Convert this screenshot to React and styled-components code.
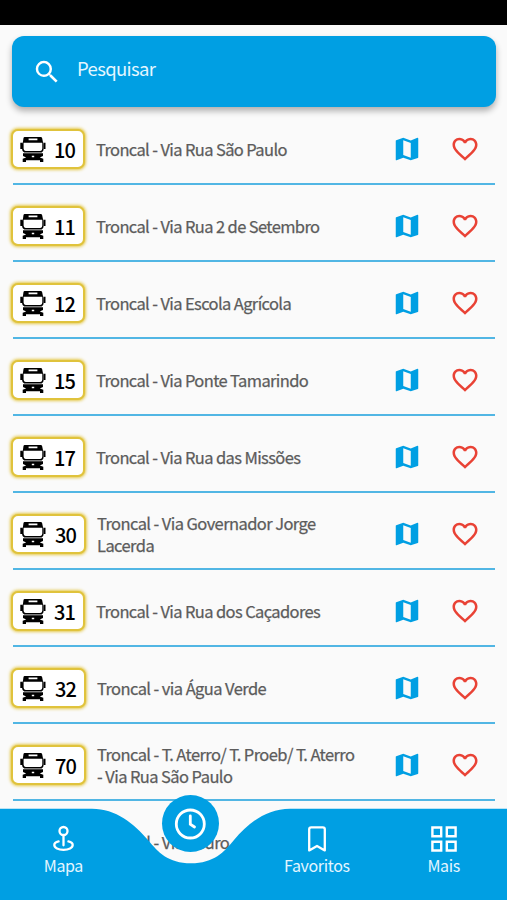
import React from 'react';
import styled, { createGlobalStyle } from 'styled-components';

const BLUE = '#009fe3';

const GlobalStyle = createGlobalStyle`
  * { box-sizing: border-box; }
  body {
    margin: 0;
    background: #fafafa;
    font-family: "Noto Sans CJK SC", "Open Sans", sans-serif;
  }
`;

const Screen = styled.main`
  position: relative;
  display: flex;
  flex-direction: column;
  width: 100%;
  height: 900px;
  overflow: hidden;
  background: #fafafa;
`;

const StatusBar = styled.div`
  flex: none;
  height: 25px;
  background: #000;
`;

const SearchBar = styled.label`
  flex: none;
  display: flex;
  align-items: center;
  gap: 15px;
  height: 71px;
  margin: 11px 11px 0 12px;
  padding-left: 20px;
  border-radius: 12px;
  background: ${BLUE};
  box-shadow: 0 4px 6px rgba(0, 0, 0, 0.3);
  color: #fff;
  svg { display: block; }
`;

const SearchText = styled.span`
  font-size: 18.5px;
  line-height: 28px;
  letter-spacing: -0.65px;
  color: #e4f6ff;
  padding-bottom: 7px;
`;

const RouteList = styled.ul`
  flex: none;
  list-style: none;
  margin: 0;
  padding: 1px 12px 0 13px;
`;

const RouteRow = styled.li`
  display: flex;
  align-items: center;
  height: 77px;
  padding-top: 7px;
  border-bottom: 2px solid #51b6e4;
`;

const Badge = styled.div`
  flex: none;
  display: flex;
  align-items: center;
  gap: 8px;
  width: ${(p) => (p.$wide ? 75 : 74)}px;
  height: 40px;
  margin-left: -2px;
  padding-left: 7px;
  border: 2px solid #e0c33c;
  border-radius: 7px;
  background: #fff;
  box-shadow: 0 0 3px 1px rgba(226, 195, 55, 0.9);
  svg { flex: none; display: block; }
`;

const RouteNumber = styled.span`
  font-size: 20px;
  font-weight: 500;
  line-height: 28px;
  letter-spacing: -0.8px;
  padding: 1px 0 0 ${(p) => (p.$wide ? 1 : 0)}px;
  color: #000;
`;

const RouteName = styled.span`
  flex: 1;
  padding-left: 11px;
  font-size: 16.5px;
  line-height: 22px;
  letter-spacing: ${(p) => (p.$wide ? -0.58 : -0.62)}px;
  white-space: pre-line;
  color: #5c5c5c;
  -webkit-text-stroke: 0.25px #5c5c5c;
`;

const RowActions = styled.div`
  flex: none;
  display: flex;
  gap: 28px;
  padding-right: 15px;
  svg { display: block; }
`;

const BottomNav = styled.nav`
  position: absolute;
  left: 0;
  right: 0;
  bottom: 0;
  height: 105px;
`;

const NavShape = styled.svg`
  position: absolute;
  left: 0;
  bottom: 0;
`;

const NavItems = styled.div`
  position: relative;
  display: grid;
  grid-template-columns: repeat(4, 1fr);
  height: 100%;
`;

const NavItem = styled.div`
  display: flex;
  flex-direction: column;
  align-items: center;
  padding-top: 29px;
  svg { display: block; }
`;

const NavLabel = styled.span`
  font-size: 16px;
  line-height: 24px;
  letter-spacing: -0.35px;
  margin-top: -1px;
  color: #e4f6ff;
`;

const ActiveItem = styled.div`
  justify-self: center;
  display: flex;
  align-items: center;
  justify-content: center;
  width: 57px;
  height: 57px;
  border-radius: 50%;
  background: ${BLUE};
`;

const BusIcon = () => (
  <svg width="26" height="26" viewBox="0 0 26 26">
    <path
      fillRule="evenodd"
      d="M4.6 0.9H20.8Q21.8 0.9 22.1 1.9L23 6.2Q23.7 7 23.7 8V12.8Q23.7 15.4 21.6 16.6H4.2Q2 15.4 2 12.8V8Q2 7 2.9 6.2L3.5 1.9Q3.8 .9 4.6 .9ZM8.6 2.6V4.3H17.4V2.6ZM3.6 6.7V12.6Q3.6 15 5.6 15H20.3Q22.3 15 22.3 12.6V6.7Z"
    />
    <path d="M.3 6.8H2V13H.3ZM23.8 6.8H25.5V13H23.8Z" />
    <path
      fillRule="evenodd"
      d="M3 17.3H23V20L19.8 21.4L23.3 22.8V25.9H20V24.2H6V25.9H2.7V22.8L6.2 21.4L3 20ZM11.8 19.7V21.2H14.2V19.7Z"
    />
  </svg>
);

const SearchIcon = () => (
  <svg width="30" height="30" viewBox="0 0 24 24" fill="#fff">
    <path d="M15.5 14h-.79l-.28-.27A6.47 6.47 0 0 0 16 9.5 6.5 6.5 0 1 0 9.5 16c1.61 0 3.09-.59 4.23-1.57l.27.28v.79l5 4.99L20.49 19zm-6 0C7.01 14 5 11.99 5 9.5S7.01 5 9.5 5 14 7.01 14 9.5 11.99 14 9.5 14" />
  </svg>
);

const MapIcon = () => (
  <svg width="30" height="30" viewBox="0 0 24 24" fill={BLUE}>
    <path d="m20.5 3-.16.03L15 5.1 9 3 3.36 4.9c-.21.07-.36.25-.36.48V20.5c0 .28.22.5.5.5l.16-.03L9 18.9l6 2.1 5.64-1.9c.21-.07.36-.25.36-.48V3.5c0-.28-.22-.5-.5-.5M15 19l-6-2.11V5l6 2.11z" />
  </svg>
);

const HeartIcon = () => (
  <svg width="30" height="30" viewBox="0 0 24 24" fill="#e94235">
    <path d="M16.5 3c-1.74 0-3.41.81-4.5 2.09C10.91 3.81 9.24 3 7.5 3 4.42 3 2 5.42 2 8.5c0 3.78 3.4 6.86 8.55 11.54L12 21.35l1.45-1.32C18.6 15.36 22 12.28 22 8.5 22 5.42 19.58 3 16.5 3m-4.4 15.55-.1.1-.1-.1C7.14 14.24 4 11.39 4 8.5 4 6.5 5.5 5 7.5 5c1.54 0 3.04.99 3.57 2.36h1.87C13.46 5.99 14.96 5 16.5 5c2 0 3.5 1.5 3.5 3.5 0 2.89-3.14 5.74-7.9 10.05" />
  </svg>
);

const PinIcon = () => (
  <svg width="26" height="30" viewBox="0 0 26 30" fill="none" stroke="#fff" strokeWidth="2.3" strokeLinecap="round">
    <circle cx="13.5" cy="7" r="4" />
    <path d="M13.5 11.2V21.3M8.6 17.4C5.9 17.9 4.3 19.3 4.3 21.1C4.3 23.9 8.3 25.8 13.5 25.8S22.7 23.9 22.7 21.1C22.7 19.3 21.1 17.9 18.4 17.4" />
  </svg>
);

const ClockIcon = () => (
  <svg width="34" height="34" viewBox="0 0 34 34" fill="none" stroke="#fff" strokeWidth="2.8" strokeLinecap="round">
    <circle cx="17.3" cy="17" r="14" />
    <path d="M17.3 9V17.3L21.5 20" />
  </svg>
);

const BookmarkIcon = () => (
  <svg width="26" height="30" viewBox="0 0 26 30" fill="none" stroke="#fff" strokeWidth="2.3" strokeLinejoin="round">
    <path d="M5.2 26.4V5.3Q5.2 3.3 7.2 3.3H18.8Q20.8 3.3 20.8 5.3V26.4L13 22Z" />
  </svg>
);

const GridIcon = () => (
  <svg width="28" height="30" viewBox="0 0 28 30" fill="none" stroke="#fff" strokeWidth="2.4">
    <path d="M2.4 3.5H11.2V12.3H2.4ZM16.8 3.5H25.6V12.3H16.8ZM2.4 17.7H11.2V26.5H2.4ZM16.8 17.7H25.6V26.5H16.8Z" />
  </svg>
);

const routes = [
  { number: '10', name: 'Troncal - Via Rua São Paulo' },
  { number: '11', name: 'Troncal - Via Rua 2 de Setembro' },
  { number: '12', name: 'Troncal - Via Escola Agrícola' },
  { number: '15', name: 'Troncal - Via Ponte Tamarindo' },
  { number: '17', name: 'Troncal - Via Rua das Missões' },
  { number: '30', name: 'Troncal - Via Governador Jorge\nLacerda', wide: true },
  { number: '31', name: 'Troncal - Via Rua dos Caçadores' },
  { number: '32', name: 'Troncal - via Água Verde', wide: true },
  { number: '70', name: 'Troncal - T. Aterro/ T. Proeb/ T. Aterro\n- Via Rua São Paulo', wide: true },
  { number: '', name: 'Troncal - Via Pedro', wide: true },
];

export default function App() {
  return (
    <Screen>
      <GlobalStyle />
      <StatusBar />
      <SearchBar>
        <SearchIcon />
        <SearchText>Pesquisar</SearchText>
      </SearchBar>
      <RouteList>
        {routes.map((route) => (
          <RouteRow key={route.name}>
            <Badge $wide={route.wide}>
              <BusIcon />
              <RouteNumber $wide={route.wide}>{route.number}</RouteNumber>
            </Badge>
            <RouteName $wide={route.wide}>{route.name}</RouteName>
            <RowActions>
              <MapIcon />
              <HeartIcon />
            </RowActions>
          </RouteRow>
        ))}
      </RouteList>
      <BottomNav>
        <NavShape width="507" height="92" viewBox="0 0 507 92">
          <path
            fill={BLUE}
            d="M0 .7H92C116 .7 134 15.5 148 32C158 44 168 55.3 191 55.3S224 44 234 32C248 15.5 266 .7 290 .7H507V92H0Z"
          />
        </NavShape>
        <NavItems>
          <NavItem>
            <PinIcon />
            <NavLabel>Mapa</NavLabel>
          </NavItem>
          <ActiveItem>
            <ClockIcon />
          </ActiveItem>
          <NavItem>
            <BookmarkIcon />
            <NavLabel>Favoritos</NavLabel>
          </NavItem>
          <NavItem>
            <GridIcon />
            <NavLabel>Mais</NavLabel>
          </NavItem>
        </NavItems>
      </BottomNav>
    </Screen>
  );
}
